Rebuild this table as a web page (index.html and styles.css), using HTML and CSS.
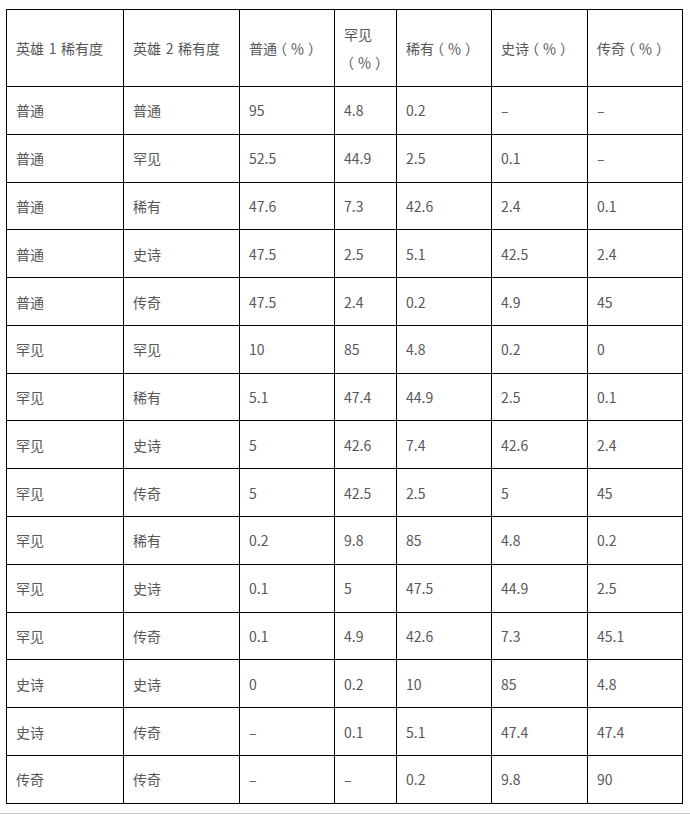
FILE: index.html
```html
<!DOCTYPE html>
<html lang="zh-CN">
<head>
<meta charset="utf-8">
<title>英雄稀有度</title>
<link rel="stylesheet" href="styles.css">
</head>
<body>
<div class="page">
<table class="rarity">
<colgroup>
<col class="c1"><col class="c2"><col class="c3"><col class="c4"><col class="c5"><col class="c6"><col class="c7">
</colgroup>
<thead>
<tr><th>英雄 1 稀有度</th><th>英雄 2 稀有度</th><th>普通<span class="pct">（％）</span></th><th>罕见<span class="pct">（％）</span></th><th>稀有<span class="pct">（％）</span></th><th>史诗<span class="pct">（％）</span></th><th>传奇<span class="pct">（％）</span></th></tr>
</thead>
<tbody>
<tr><td>普通</td><td>普通</td><td>95</td><td>4.8</td><td>0.2</td><td>–</td><td>–</td></tr>
<tr><td>普通</td><td>罕见</td><td>52.5</td><td>44.9</td><td>2.5</td><td>0.1</td><td>–</td></tr>
<tr><td>普通</td><td>稀有</td><td>47.6</td><td>7.3</td><td>42.6</td><td>2.4</td><td>0.1</td></tr>
<tr><td>普通</td><td>史诗</td><td>47.5</td><td>2.5</td><td>5.1</td><td>42.5</td><td>2.4</td></tr>
<tr><td>普通</td><td>传奇</td><td>47.5</td><td>2.4</td><td>0.2</td><td>4.9</td><td>45</td></tr>
<tr><td>罕见</td><td>罕见</td><td>10</td><td>85</td><td>4.8</td><td>0.2</td><td>0</td></tr>
<tr><td>罕见</td><td>稀有</td><td>5.1</td><td>47.4</td><td>44.9</td><td>2.5</td><td>0.1</td></tr>
<tr><td>罕见</td><td>史诗</td><td>5</td><td>42.6</td><td>7.4</td><td>42.6</td><td>2.4</td></tr>
<tr><td>罕见</td><td>传奇</td><td>5</td><td>42.5</td><td>2.5</td><td>5</td><td>45</td></tr>
<tr><td>罕见</td><td>稀有</td><td>0.2</td><td>9.8</td><td>85</td><td>4.8</td><td>0.2</td></tr>
<tr><td>罕见</td><td>史诗</td><td>0.1</td><td>5</td><td>47.5</td><td>44.9</td><td>2.5</td></tr>
<tr><td>罕见</td><td>传奇</td><td>0.1</td><td>4.9</td><td>42.6</td><td>7.3</td><td>45.1</td></tr>
<tr><td>史诗</td><td>史诗</td><td>0</td><td>0.2</td><td>10</td><td>85</td><td>4.8</td></tr>
<tr><td>史诗</td><td>传奇</td><td>–</td><td>0.1</td><td>5.1</td><td>47.4</td><td>47.4</td></tr>
<tr><td>传奇</td><td>传奇</td><td>–</td><td>–</td><td>0.2</td><td>9.8</td><td>90</td></tr>
</tbody>
</table>
<div class="rule"></div>
</div>
</body>
</html>
```
FILE: styles.css
```css
html, body {
  margin: 0;
  padding: 0;
  background: #ffffff;
}
.page {
  padding: 9px 0 0 6px;
}
.rarity {
  border-collapse: collapse;
  table-layout: fixed;
  width: 677px;
  font-family: "Noto Sans CJK SC", "Noto Sans", sans-serif;
  font-size: 14px;
  color: #575757;
}
.c1 { width: 117px; }
.c2 { width: 116px; }
.c3 { width: 95px; }
.c4 { width: 62px; }
.c5 { width: 95px; }
.c6 { width: 96px; }
.c7 { width: 95px; }
.rarity th,
.rarity td {
  border: 1px solid #000;
  text-align: left;
  vertical-align: middle;
  font-weight: normal;
  line-height: 28px;
  padding: 0 9px;
}
.rarity th {
  height: 56px;
  padding-top: 10px;
  padding-bottom: 10px;
  word-spacing: 1.5px;
}
.rarity td {
  height: 28px;
  padding-top: 9.4px;
  padding-bottom: 9.4px;
}
.pct {
  font-feature-settings: "halt";
  letter-spacing: 3.5px;
  margin-left: 3px;
}
.rule {
  margin-top: 9px;
  margin-left: -6px;
  height: 1px;
  background: #c4c4c4;
}
```
